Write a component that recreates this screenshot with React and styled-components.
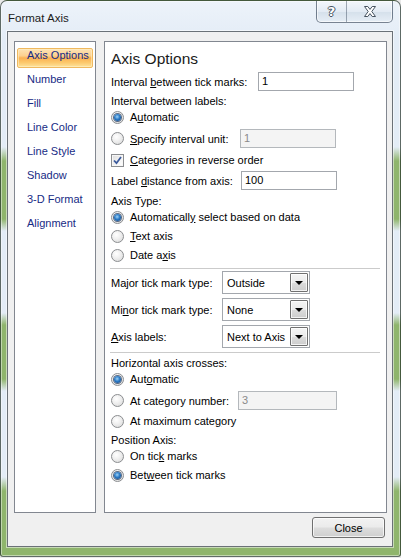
import React from "react";
import styled, { createGlobalStyle } from "styled-components";

const Global = createGlobalStyle`
  html, body { margin: 0; padding: 0; background: #e9e9e9; }
  body {
    font-family: "Liberation Sans", Arial, sans-serif;
    font-size: 11px;
    color: #000;
  }
  * { box-sizing: border-box; }
`;

const LIGHT = "#e3ecf6";
const GREEN = "#8fb56c";

const Window = styled.div`
  width: 401px;
  height: 557px;
  border: 1px solid rgba(35, 50, 40, 0.7);
  border-radius: 7px 7px 3px 3px;
  background: linear-gradient(
    to bottom,
    #edf3fa 0px,
    ${LIGHT} 40px,
    ${LIGHT} 146px,
    ${GREEN} 160px,
    ${GREEN} 218px,
    ${LIGHT} 230px,
    ${LIGHT} 312px,
    ${GREEN} 324px,
    ${GREEN} 378px,
    ${LIGHT} 390px,
    ${LIGHT} 476px,
    ${GREEN} 490px,
    ${GREEN} 100%
  );
  box-shadow: inset 0 0 0 1px rgba(255, 255, 255, 0.45);
  display: flex;
  flex-direction: column;
  overflow: hidden;
`;

const TitleBar = styled.div`
  height: 30px;
  flex: none;
  display: flex;
  justify-content: space-between;
  align-items: flex-start;
  padding-left: 7px;
`;

const Title = styled.div`
  padding-top: 10px;
  line-height: 14px;
  font-size: 11.5px;
  color: #1b1b1b;
`;

const TitleButtons = styled.div`
  display: flex;
  height: 22px;
  margin-right: 7px;
  border: 1px solid rgba(55, 70, 90, 0.65);
  border-top: none;
  border-radius: 0 0 5px 5px;
  overflow: hidden;
  background: linear-gradient(#f3f7fb 0%, #e3ebf4 50%, #d5e0eb 52%, #e6eef6 100%);
  box-shadow: inset 0 0 0 1px rgba(255, 255, 255, 0.6);
`;

const TitleButton = styled.div`
  width: ${(p) => p.$w}px;
  display: flex;
  align-items: center;
  justify-content: center;
  & + & {
    border-left: 1px solid rgba(55, 70, 90, 0.45);
  }
`;

const HelpGlyph = styled.span`
  font-family: "DejaVu Sans", sans-serif;
  font-weight: bold;
  font-size: 13px;
  line-height: 13px;
  color: #ffffff;
  text-shadow: 1px 0 #46525f, -1px 0 #46525f, 0 1px #46525f, 0 -1px #46525f;
  margin-top: -1px;
`;

const Client = styled.div`
  flex: 1;
  margin: 0 7px 9px 6px;
  border: 1px solid #6b7177;
  box-shadow: 0 0 0 1px rgba(255, 255, 255, 0.5);
  background: #f0f0f0;
  padding: 9px 5px 0 6px;
  display: flex;
  flex-direction: column;
`;

const Body = styled.div`
  height: 472px;
  display: flex;
  gap: 8px;
`;

const Nav = styled.div`
  width: 82px;
  flex: none;
  border: 1px solid #828790;
  background: #fff;
  padding: 6px 2px;
`;

const NavItem = styled.div`
  height: 20px;
  margin-bottom: 4px;
  padding-left: 9px;
  line-height: 12px;
  padding-top: 0;
  color: #172b85;
  white-space: nowrap;
  border: 1px solid transparent;
  border-radius: 2px;
  ${(p) =>
    p.$active &&
    `
    border-color: #f0b95f;
    background: linear-gradient(#fde3b4 0%, #fcd08f 38%, #fab152 50%, #fcc86c 75%, #fde39c 100%);
    box-shadow: inset 0 0 0 1px rgba(255, 240, 200, 0.6);
  `}
`;

const Panel = styled.div`
  flex: 1;
  border: 1px solid #828790;
  background: #fff;
  padding: 6px 6px 0 6px;
  display: flex;
  flex-direction: column;
`;

const Heading = styled.div`
  height: 22px;
  line-height: 22px;
  font-size: 15.5px;
  color: #1a1a1a;
`;

const Row = styled.div`
  display: flex;
  align-items: center;
  height: ${(p) => p.$h || 16}px;
  margin-top: ${(p) => p.$mt || 0}px;
  white-space: nowrap;
`;

const Text = styled.span`
  ${(p) => (p.$w ? `width: ${p.$w}px; flex: none;` : "")}
  line-height: 14px;
`;

const K = styled.span`
  text-decoration: underline;
`;

const TextBox = styled.div`
  width: ${(p) => p.$w || 96}px;
  height: 19px;
  border: 1px solid ${(p) => (p.$disabled ? "#b4b8bc" : "#a3a7ad")};
  background: ${(p) => (p.$disabled ? "#f4f4f4" : "#fff")};
  color: ${(p) => (p.$disabled ? "#8a8a8a" : "#000")};
  padding-left: 3px;
  line-height: 17px;
`;

const Radio = styled.span`
  width: 13px;
  height: 13px;
  flex: none;
  margin-right: 6px;
  border-radius: 50%;
  border: 1px solid #8b8d90;
  background: radial-gradient(circle at 40% 35%, #ffffff 0%, #f1f1f1 40%, #d6d6d6 100%);
  display: flex;
  align-items: center;
  justify-content: center;
  ${(p) =>
    p.$checked &&
    `
    &::after {
      content: "";
      width: 7px;
      height: 7px;
      border-radius: 50%;
      background: radial-gradient(circle at 45% 40%, #9fd3f7 0%, #2a7ac6 45%, #133f78 100%);
      box-shadow: 0 0 0 1px rgba(25, 50, 85, 0.7);
    }
  `}
`;

const CheckBox = styled.span`
  width: 13px;
  height: 13px;
  flex: none;
  margin-right: 6px;
  border: 1px solid #8b8d90;
  background: linear-gradient(135deg, #dcdcdc 0%, #f4f4f4 60%, #ffffff 100%);
  box-shadow: inset 0 0 0 1px #f6f6f6;
  display: flex;
  align-items: center;
  justify-content: center;
`;

const Divider = styled.div`
  height: 1px;
  flex: none;
  margin: ${(p) => p.$mt || 0}px 0 0 -1px;
  width: 270px;
  background: #cbcbcb;
`;

const SelectBox = styled.div`
  width: 88px;
  height: 23px;
  border: 1px solid #a3a7ad;
  background: #fff;
  display: flex;
  align-items: center;
  padding: 1px;
`;

const SelectValue = styled.span`
  flex: 1;
  padding-left: 3px;
  line-height: 14px;
  overflow: hidden;
`;

const SelectButton = styled.span`
  width: 18px;
  height: 19px;
  flex: none;
  border: 1px solid #707070;
  border-radius: 1px;
  background: linear-gradient(#f5f5f5 0%, #ebebeb 50%, #dcdcdc 51%, #cdcdcd 100%);
  box-shadow: inset 0 0 0 1px rgba(255, 255, 255, 0.75);
  display: flex;
  align-items: center;
  justify-content: center;
`;

const Arrow = styled.span`
  width: 0;
  height: 0;
  border-left: 4px solid transparent;
  border-right: 4px solid transparent;
  border-top: 4px solid #000;
  margin-top: 1px;
`;

const Footer = styled.div`
  display: flex;
  justify-content: flex-end;
  margin-top: 4px;
  padding-right: 2px;
`;

const Button = styled.div`
  width: 73px;
  height: 21px;
  border: 1px solid #707070;
  border-radius: 3px;
  background: linear-gradient(#f2f2f2 0%, #ebebeb 48%, #dddddd 52%, #cfcfcf 100%);
  box-shadow: inset 0 0 0 1px rgba(255, 255, 255, 0.7);
  display: flex;
  align-items: center;
  justify-content: center;
  line-height: 14px;
`;

const Select = ({ value }) => (
  <SelectBox>
    <SelectValue>{value}</SelectValue>
    <SelectButton>
      <Arrow />
    </SelectButton>
  </SelectBox>
);

const navItems = [
  "Axis Options",
  "Number",
  "Fill",
  "Line Color",
  "Line Style",
  "Shadow",
  "3-D Format",
  "Alignment",
];

export default function App() {
  return (
    <>
      <Global />
      <Window>
        <TitleBar>
          <Title>Format Axis</Title>
          <TitleButtons>
            <TitleButton $w={29}>
              <HelpGlyph>?</HelpGlyph>
            </TitleButton>
            <TitleButton $w={46}>
              <svg width="14" height="11" viewBox="0 0 14 11">
                <path
                  d="M1.5 0.5 H4.8 L7 3.4 L9.2 0.5 H12.5 L8.8 5.5 L12.5 10.5 H9.2 L7 7.6 L4.8 10.5 H1.5 L5.2 5.5 Z"
                  fill="#ffffff"
                  stroke="#46525f"
                  strokeWidth="1"
                  strokeLinejoin="round"
                />
              </svg>
            </TitleButton>
          </TitleButtons>
        </TitleBar>
        <Client>
          <Body>
            <Nav>
              {navItems.map((n, i) => (
                <NavItem key={n} $active={i === 0}>
                  {n}
                </NavItem>
              ))}
            </Nav>
            <Panel>
              <Heading>Axis Options</Heading>
              <Row $mt={2} $h={19}>
                <Text $w={147}>
                  Interval <K>b</K>etween tick marks:
                </Text>
                <TextBox>1</TextBox>
              </Row>
              <Row $mt={2}>
                <Text>Interval between labels:</Text>
              </Row>
              <Row>
                <Radio $checked />
                <Text>
                  A<K>u</K>tomatic
                </Text>
              </Row>
              <Row $mt={4} $h={19}>
                <Radio />
                <Text $w={110}>
                  <K>S</K>pecify interval unit:
                </Text>
                <TextBox $disabled>1</TextBox>
              </Row>
              <Row $mt={4}>
                <CheckBox>
                  <svg width="9" height="9" viewBox="0 0 9 9">
                    <path
                      d="M1 4.5 L3.5 7.2 L8 1"
                      fill="none"
                      stroke="#3b5a9c"
                      strokeWidth="1.8"
                    />
                  </svg>
                </CheckBox>
                <Text>
                  <K>C</K>ategories in reverse order
                </Text>
              </Row>
              <Row $mt={3} $h={19}>
                <Text $w={130}>
                  Label <K>d</K>istance from axis:
                </Text>
                <TextBox>100</TextBox>
              </Row>
              <Row $mt={3}>
                <Text>Axis Type:</Text>
              </Row>
              <Row>
                <Radio $checked />
                <Text>
                  Automaticall<K>y</K> select based on data
                </Text>
              </Row>
              <Row $mt={3}>
                <Radio />
                <Text>
                  <K>T</K>ext axis
                </Text>
              </Row>
              <Row $mt={3}>
                <Radio />
                <Text>
                  Date a<K>x</K>is
                </Text>
              </Row>
              <Divider $mt={5} />
              <Row $mt={2} $h={23}>
                <Text $w={111}>Major tick mark type:</Text>
                <Select value="Outside" />
              </Row>
              <Row $mt={4} $h={23}>
                <Text $w={111}>
                  Mi<K>n</K>or tick mark type:
                </Text>
                <Select value="None" />
              </Row>
              <Row $mt={4} $h={23}>
                <Text $w={111}>
                  <K>A</K>xis labels:
                </Text>
                <Select value="Next to Axis" />
              </Row>
              <Divider $mt={4} />
              <Row $mt={2}>
                <Text>Horizontal axis crosses:</Text>
              </Row>
              <Row>
                <Radio $checked />
                <Text>
                  Aut<K>o</K>matic
                </Text>
              </Row>
              <Row $mt={4} $h={19}>
                <Radio />
                <Text $w={108}>
                  At cate<K>g</K>ory number:
                </Text>
                <TextBox $disabled $w={99}>
                  3
                </TextBox>
              </Row>
              <Row $mt={3}>
                <Radio />
                <Text>
                  At maximum cate<K>g</K>ory
                </Text>
              </Row>
              <Row $mt={3}>
                <Text>Position Axis:</Text>
              </Row>
              <Row>
                <Radio />
                <Text>
                  On tic<K>k</K> marks
                </Text>
              </Row>
              <Row $mt={3}>
                <Radio $checked />
                <Text>
                  Bet<K>w</K>een tick marks
                </Text>
              </Row>
            </Panel>
          </Body>
          <Footer>
            <Button>Close</Button>
          </Footer>
        </Client>
      </Window>
    </>
  );
}
